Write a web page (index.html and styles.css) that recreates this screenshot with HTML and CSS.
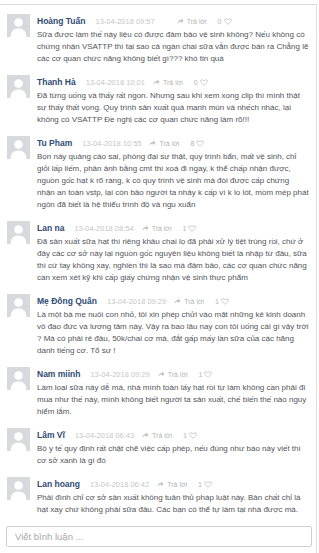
FILE: index.html
```html
<!DOCTYPE html>
<html lang="vi">
<head>
    <meta charset="UTF-8">
    <title>Bình luận</title>
    <link rel="stylesheet" href="styles.css">
</head>
<body>
<svg class="defs" width="0" height="0">
    <symbol id="ava" viewBox="0 0 23 23">
        <rect width="23" height="23" fill="#d8d9dc"/>
        <circle cx="11.5" cy="8.5" r="4.3" fill="#fff"/>
        <path d="M3.5 23 Q3.5 14.5 11.5 14.5 Q19.5 14.5 19.5 23 Z" fill="#fff"/>
    </symbol>
    <symbol id="arrow" viewBox="0 0 8 7">
        <path d="M0.5 6.5 Q0.8 2.6 4.8 2.4 L4.8 0.6 L7.6 3.3 L4.8 6 L4.8 4.2 Q2 4.2 0.5 6.5 Z" fill="#c2c2c2"/>
    </symbol>
    <symbol id="heart" viewBox="0 0 10 9">
        <path d="M5 8.2 L1.3 4.6 Q0 3.2 0.9 1.7 Q2.4 -0.2 5 2.3 Q7.6 -0.2 9.1 1.7 Q10 3.2 8.7 4.6 Z" fill="none" stroke="#b9b9b9" stroke-width="0.9"/>
    </symbol>
</svg>

<div class="box">
    <div class="comment">
        <svg class="avatar"><use href="#ava"/></svg>
        <div class="main">
            <div class="meta">
                <span class="name">Hoàng Tuấn</span>
                <span class="date date-wide">13-04-2018 09:57</span>
                <span class="reply"><svg class="ico"><use href="#arrow"/></svg>Trả lời</span>
                <span class="like">0<svg class="heart"><use href="#heart"/></svg></span>
            </div>
            <p class="text">Sữa được làm thế này liệu có được đảm bảo vệ sinh không? Nếu không có chứng nhận VSATTP thì tại sao cả ngàn chai sữa vẫn được bán ra Chẳng lẽ các cơ quan chức năng không biết gì??? khó tin quá</p>
        </div>
    </div>
    <div class="comment">
        <svg class="avatar"><use href="#ava"/></svg>
        <div class="main">
            <div class="meta">
                <span class="name">Thanh Hà</span>
                <span class="date">13-04-2018 10:01</span>
                <span class="reply"><svg class="ico"><use href="#arrow"/></svg>Trả lời</span>
                <span class="like">0<svg class="heart"><use href="#heart"/></svg></span>
            </div>
            <p class="text">Đã từng uống và thấy rất ngon. Nhưng sau khi xem xong clip thì mình thật sự thấy thất vọng. Quy trình sản xuất quá manh mún và nhếch nhác, lại không có VSATTP Đề nghị các cơ quan chức năng làm rõ!!!</p>
        </div>
    </div>
    <div class="comment">
        <svg class="avatar"><use href="#ava"/></svg>
        <div class="main">
            <div class="meta">
                <span class="name">Tu Pham</span>
                <span class="date">13-04-2018 10:55</span>
                <span class="reply"><svg class="ico"><use href="#arrow"/></svg>Trả lời</span>
                <span class="like">8<svg class="heart"><use href="#heart"/></svg></span>
            </div>
            <p class="text">Bọn này quảng cáo sai, phóng đại sự thật, quy trình bẩn, mất vệ sinh, chỉ giỏi lấp liếm, phản ảnh bằng cmt thì xoá đi ngay, k thể chấp nhận được, nguồn gốc hạt k rõ ràng, k có quy trình vệ sinh mà đòi được cấp chứng nhận an toàn vstp, lại còn bảo người ta nhảy k cấp vì k lo lót, mồm mép phát ngôn đã biết là hệ thiểu trình độ và ngu xuẩn</p>
        </div>
    </div>
    <div class="comment">
        <svg class="avatar"><use href="#ava"/></svg>
        <div class="main">
            <div class="meta">
                <span class="name">Lan na</span>
                <span class="date">13-04-2018 08:54</span>
                <span class="reply"><svg class="ico"><use href="#arrow"/></svg>Trả lời</span>
                <span class="like">1<svg class="heart"><use href="#heart"/></svg></span>
            </div>
            <p class="text">Đã sản xuất sữa hạt thì riêng khâu chai lọ đã phải xử lý tiệt trùng rồi, chứ ở đây các cơ sở này lại nguồn gốc nguyên liệu không biết là nhập từ đâu, sữa thì cứ tay không xay, nghiền thì là sao mà đảm bảo, các cơ quan chức năng cần xem xét kỹ khi cấp giấy chứng nhận vệ sinh thực phẩm</p>
        </div>
    </div>
    <div class="comment">
        <svg class="avatar"><use href="#ava"/></svg>
        <div class="main">
            <div class="meta">
                <span class="name">Mẹ Đông Quân</span>
                <span class="date">13-04-2018 09:29</span>
                <span class="reply"><svg class="ico"><use href="#arrow"/></svg>Trả lời</span>
                <span class="like">1<svg class="heart"><use href="#heart"/></svg></span>
            </div>
            <p class="text">Là một bà mẹ nuôi con nhỏ, tôi xin phép chửi vào mặt những kẻ kinh doanh vô đạo đức và lương tâm này. Vậy ra bao lâu nay con tôi uống cái gì vậy trời ? Mà có phải rẻ đâu, 50k/chai cơ mà, đắt gấp mấy lần sữa của các hãng danh tiếng cơ. Tổ sư !</p>
        </div>
    </div>
    <div class="comment">
        <svg class="avatar"><use href="#ava"/></svg>
        <div class="main">
            <div class="meta">
                <span class="name">Nam miinh</span>
                <span class="date">13-04-2018 09:29</span>
                <span class="reply"><svg class="ico"><use href="#arrow"/></svg>Trả lời</span>
                <span class="like">1<svg class="heart"><use href="#heart"/></svg></span>
            </div>
            <p class="text">Làm loại sữa này dễ mà, nhà mình toàn lấy hạt rồi tự làm không cần phải đi mua như thế này, mình không biết người ta sản xuất, chế biến thế nào nguy hiểm lắm.</p>
        </div>
    </div>
    <div class="comment">
        <svg class="avatar"><use href="#ava"/></svg>
        <div class="main">
            <div class="meta">
                <span class="name">Lâm Vĩ</span>
                <span class="date">13-04-2018 06:43</span>
                <span class="reply"><svg class="ico"><use href="#arrow"/></svg>Trả lời</span>
                <span class="like">1<svg class="heart"><use href="#heart"/></svg></span>
            </div>
            <p class="text">Bộ y tế quy định rất chặt chẽ việc cấp phép, nếu đúng như báo này viết thì cơ sở xanh là gì đó</p>
        </div>
    </div>
    <div class="comment">
        <svg class="avatar"><use href="#ava"/></svg>
        <div class="main">
            <div class="meta">
                <span class="name">Lan hoang</span>
                <span class="date">13-04-2018 06:42</span>
                <span class="reply"><svg class="ico"><use href="#arrow"/></svg>Trả lời</span>
                <span class="like">1<svg class="heart"><use href="#heart"/></svg></span>
            </div>
            <p class="text">Phải đình chỉ cơ sở sản xuất không tuân thủ pháp luật này. Bản chất chỉ là hạt xay chứ không phải sữa đâu. Các bạn có thể tự làm tại nhà được mà.</p>
        </div>
    </div>
    <div class="write">
        <input type="text" placeholder="Viết bình luận ...">
    </div>
</div>
</body>
</html>
```
FILE: styles.css
```css
*{
    margin: 0;
    padding: 0;
}
html,body {
    background-color: #fff;
    font-family: "Liberation Sans", Arial, sans-serif;
}
.defs {
    position: absolute;
}
.box {
    margin: 4px 2px 0 -1px;
    border-top: 1px solid #dcdcdc;
    border-right: 1px solid #dcdcdc;
    padding: 9px 7px 6px 8px;
}
.comment {
    display: flex;
    gap: 7px;
    margin-bottom: 10px;
}
.avatar {
    width: 23px;
    height: 23px;
    flex: none;
}
.main {
    flex: 1;
}
.meta {
    height: 14px;
    display: flex;
    align-items: center;
    white-space: nowrap;
}
.name {
    font-size: 8.5px;
    font-weight: bold;
    color: #2f4b73;
    margin-right: 10px;
}
.date {
    font-size: 7.5px;
    color: #c6c6c6;
    margin-right: 8px;
}
.date-wide {
    margin-right: 22px;
}
.reply {
    font-size: 7px;
    color: #b4b4b4;
    display: flex;
    align-items: center;
    margin-right: 11px;
}
.ico {
    width: 7px;
    height: 6px;
    margin-right: 3px;
}
.like {
    font-size: 7px;
    color: #b4b4b4;
    display: flex;
    align-items: center;
}
.heart {
    width: 8px;
    height: 7px;
    margin-left: 2px;
}
.text {
    margin-top: 1px;
    font-size: 8px;
    line-height: 12px;
    color: #52555a;
}
.write {
    margin: 0 -3px 0 -1px;
}
.write input {
    display: block;
    width: 100%;
    height: 21px;
    box-sizing: border-box;
    border: 1px solid #cfcfcf;
    border-radius: 2px;
    padding: 0 8px;
    font-family: "Liberation Sans", Arial, sans-serif;
    font-size: 9.5px;
    color: #333;
    outline: none;
}
.write input::placeholder {
    color: #a8a8a8;
}
```
